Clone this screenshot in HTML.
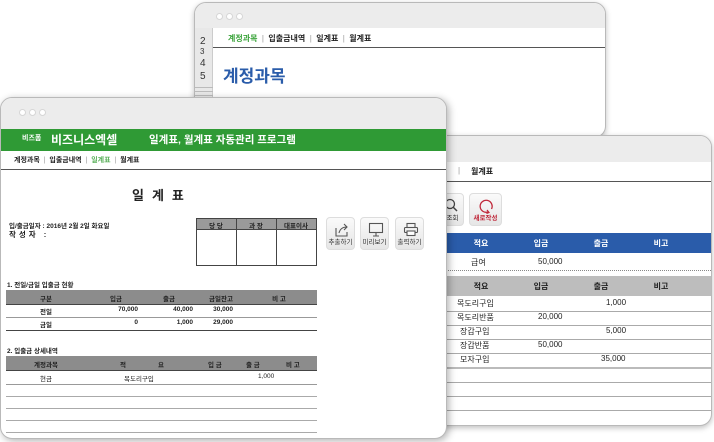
<!DOCTYPE html>
<html><head><meta charset="utf-8">
<style>
*{margin:0;padding:0;box-sizing:border-box}
body{width:714px;height:442px;background:#fff;position:relative;overflow:hidden;font-family:"Liberation Sans","Noto Sans CJK KR",sans-serif;color:#222}
.a{position:absolute}
.win{position:absolute;background:#fff;border:1px solid #b9b9b9;border-radius:12px;overflow:hidden;box-shadow:0 2px 6px rgba(0,0,0,.25)}
.tb{position:absolute;left:0;right:0;top:0;background:#ececec}
.dots{position:absolute;display:flex;gap:3px}
.dots i{width:7px;height:7px;border-radius:50%;background:#fff;border:1px solid #d6d6d6;display:block}
.t{position:absolute;white-space:nowrap;font-size:8px;font-weight:bold}
.c{text-align:center}
.r{text-align:right}
.hl{position:absolute;height:1px;background:#888}
.btn{position:absolute;width:29px;height:33px;border-radius:4px;background:linear-gradient(#fafafa,#e6e6e6);border:1px solid #ddd}
.btn span{position:absolute;bottom:3px;left:0;right:0;text-align:center;font-size:6.5px;color:#333}
</style></head><body>

<!-- back window A -->
<div class="win" style="left:194px;top:2px;width:412px;height:136px">
  <div class="tb" style="height:25px"></div>
  <div class="dots" style="left:21px;top:10px"><i></i><i></i><i></i></div>
  <div class="a" style="left:0;top:25px;width:18px;height:111px;background:#e8e8e8;border-right:1px solid #ccc"></div>
  <div class="t" style="left:5px;top:33px;font-size:10px;font-weight:normal;color:#333">2</div>
  <div class="t" style="left:5px;top:44px;font-size:8px;font-weight:normal;color:#333">3</div>
  <div class="t" style="left:5px;top:55px;font-size:10px;font-weight:normal;color:#333">4</div>
  <div class="t" style="left:5px;top:68px;font-size:10px;font-weight:normal;color:#333">5</div>
  <div class="a" style="left:0;top:84px;width:18px;height:1px;background:#bbb"></div>
  <div class="a" style="left:0;top:88px;width:18px;height:1px;background:#bbb"></div>
  <div class="a" style="left:0;top:92px;width:18px;height:1px;background:#bbb"></div>
  <div class="t" style="left:33px;top:30px;color:#3aa33a">계정과목 &nbsp;<span style="color:#999;font-weight:normal">|</span>&nbsp; <span style="color:#222">입출금내역</span> &nbsp;<span style="color:#999;font-weight:normal">|</span>&nbsp; <span style="color:#222">일계표</span> &nbsp;<span style="color:#999;font-weight:normal">|</span>&nbsp; <span style="color:#222">월계표</span></div>
  <div class="hl" style="left:18px;right:0;top:44px;background:#555"></div>
  <div class="t" style="left:28px;top:59px;font-size:17px;color:#2a5caa">계정과목</div>
  <div class="a" style="left:27px;top:95px;width:130px;height:2px;background:#6b86b5"></div>
</div>

<!-- right window C -->
<div class="win" style="left:420px;top:135px;width:292px;height:291px">
  <div class="tb" style="height:26px"></div>
  <div class="t" style="left:37px;top:30px;color:#999;font-weight:normal">|</div>
  <div class="t" style="left:50px;top:30px">월계표</div>
  <div class="hl" style="left:0;right:0;top:45px;background:#555"></div>
  <div class="btn" style="left:14px;top:57px"><span>회조회</span><svg class="a" style="left:8px;top:4px" width="14" height="14"><circle cx="6" cy="6" r="4.5" fill="none" stroke="#444" stroke-width="1.3"/><path d="M9 9l4 4" stroke="#444" stroke-width="1.5"/></svg></div>
  <div class="btn" style="left:48px;top:57px;width:33px"><span style="color:#c0283a;font-weight:bold">새로작성</span><svg class="a" style="left:9px;top:4px" width="16" height="16"><path d="M9 14A6 6 0 1 1 12.5 11" fill="none" stroke="#c0283a" stroke-width="1.3"/><path d="M8 12l2 2.5-2.5 1" fill="none" stroke="#c0283a" stroke-width="1.2"/></svg></div>
  <div class="a" style="left:0;right:0;top:97px;height:20px;background:#2a5caa"></div>
  <div class="t c" style="left:40px;width:40px;top:102px;color:#fff">적요</div>
  <div class="t c" style="left:100px;width:40px;top:102px;color:#fff">입금</div>
  <div class="t c" style="left:160px;width:40px;top:102px;color:#fff">출금</div>
  <div class="t c" style="left:220px;width:40px;top:102px;color:#fff">비고</div>
  <div class="t" style="left:50px;top:121px;font-weight:normal">급여</div>
  <div class="t" style="left:117px;top:121px;font-weight:normal">50,000</div>
  <div class="a" style="left:0;right:0;top:134px;border-top:1px dotted #888"></div>
  <div class="a" style="left:0;right:0;top:140px;height:20px;background:#bdbdbd"></div>
  <div class="t c" style="left:40px;width:40px;top:145px">적요</div>
  <div class="t c" style="left:100px;width:40px;top:145px">입금</div>
  <div class="t c" style="left:160px;width:40px;top:145px">출금</div>
  <div class="t c" style="left:220px;width:40px;top:145px">비고</div>
  <div class="t" style="left:36px;top:162px;font-weight:normal">목도리구입</div><div class="t" style="left:185px;top:162px;font-weight:normal">1,000</div>
  <div class="hl" style="left:0;right:0;top:175px;background:#aaa"></div>
  <div class="t" style="left:36px;top:176px;font-weight:normal">목도리반품</div><div class="t" style="left:117px;top:176px;font-weight:normal">20,000</div>
  <div class="hl" style="left:0;right:0;top:189px;background:#aaa"></div>
  <div class="t" style="left:39px;top:190px;font-weight:normal">장갑구입</div><div class="t" style="left:185px;top:190px;font-weight:normal">5,000</div>
  <div class="hl" style="left:0;right:0;top:203px;background:#aaa"></div>
  <div class="t" style="left:39px;top:204px;font-weight:normal">장갑반품</div><div class="t" style="left:117px;top:204px;font-weight:normal">50,000</div>
  <div class="hl" style="left:0;right:0;top:217px;background:#aaa"></div>
  <div class="t" style="left:39px;top:218px;font-weight:normal">모자구입</div><div class="t" style="left:180px;top:218px;font-weight:normal">35,000</div>
  <div class="a" style="left:0;right:0;top:231px;height:2px;background:#bbb"></div>
  <div class="hl" style="left:0;right:0;top:246px;background:#aaa"></div>
  <div class="hl" style="left:0;right:0;top:260px;background:#aaa"></div>
  <div class="hl" style="left:0;right:0;top:274px;background:#aaa"></div>
</div>

<!-- front window B -->
<div class="win" style="left:0;top:97px;width:447px;height:342px;box-shadow:2px 2px 8px rgba(0,0,0,.3)">
  <div class="tb" style="height:31px"></div>
  <div class="dots" style="left:18px;top:11px"><i></i><i></i><i></i></div>
  <div class="a" style="left:0;right:0;top:31px;height:22px;background:#2f9a35"></div>
  <div class="t" style="left:21px;top:35px;color:#fff;font-size:7px">비즈폼</div>
  <div class="t" style="left:50px;top:33px;color:#fff;font-size:12px">비즈니스엑셀</div>
  <div class="t" style="left:148px;top:34px;color:#fff;font-size:10.5px">일계표, 월계표 자동관리 프로그램</div>
  <div class="t" style="left:13px;top:57px;font-size:7px">계정과목 &nbsp;<span style="color:#999;font-weight:normal">|</span>&nbsp; 입출금내역 &nbsp;<span style="color:#999;font-weight:normal">|</span>&nbsp; <span style="color:#5ab05a">일계표</span> &nbsp;<span style="color:#999;font-weight:normal">|</span>&nbsp; 월계표</div>
  <div class="hl" style="left:0;right:0;top:71px;background:#555"></div>
  <div class="t" style="left:131px;top:87px;font-size:13px;letter-spacing:8px">일계표</div>
  <div class="t" style="left:8px;top:122px;font-size:6.5px">입/출금일자 : 2016년 2월 2일 화요일</div>
  <div class="t" style="left:8px;top:131px;font-size:7.5px;letter-spacing:3px">작성자 :</div>
  <div class="a" style="left:195px;top:120px;width:121px;height:48px;border:1px solid #444"></div>
  <div class="a" style="left:195px;top:120px;width:121px;height:12px;background:#9a9a9a;border:1px solid #444"></div>
  <div class="a" style="left:235px;top:120px;width:1px;height:48px;background:#444"></div>
  <div class="a" style="left:275px;top:120px;width:1px;height:48px;background:#444"></div>
  <div class="t c" style="left:195px;width:40px;top:122px;font-size:6.5px">당 당</div>
  <div class="t c" style="left:235px;width:40px;top:122px;font-size:6.5px">과 장</div>
  <div class="t c" style="left:275px;width:40px;top:122px;font-size:6.5px">대표이사</div>
  <div class="btn" style="left:325px;top:119px"><span>추출하기</span><svg class="a" style="left:7px;top:4px" width="16" height="15"><path d="M2 6v8h11v-4" fill="none" stroke="#555" stroke-width="1.1"/><path d="M5 11c1-4 4-6 8-6M10 2l3 3-3 3" fill="none" stroke="#555" stroke-width="1.1"/></svg></div>
  <div class="btn" style="left:359px;top:119px"><span>미리보기</span><svg class="a" style="left:7px;top:4px" width="16" height="15"><rect x="1.5" y="1.5" width="13" height="9" fill="none" stroke="#555" stroke-width="1.1"/><path d="M8 10.5v3M5 14h6" stroke="#555" stroke-width="1.1"/></svg></div>
  <div class="btn" style="left:394px;top:119px"><span>출력하기</span><svg class="a" style="left:7px;top:4px" width="16" height="15"><rect x="4" y="1.5" width="8" height="4" fill="none" stroke="#555" stroke-width="1.1"/><rect x="1.5" y="5.5" width="13" height="5" rx="1" fill="none" stroke="#555" stroke-width="1.1"/><rect x="4" y="9" width="8" height="4.5" fill="#fff" stroke="#555" stroke-width="1.1"/></svg></div>

  <div class="t" style="left:6px;top:181px;font-size:6.5px">1. 전일/금일 입출금 현황</div>
  <div class="a" style="left:5px;top:192px;width:311px;height:15px;background:#8c8c8c;border-bottom:1px solid #444"></div>
  <div class="t c" style="left:25px;width:40px;top:195px;font-size:6.5px">구분</div>
  <div class="t c" style="left:95px;width:40px;top:195px;font-size:6.5px">입금</div>
  <div class="t c" style="left:148px;width:40px;top:195px;font-size:6.5px">출금</div>
  <div class="t c" style="left:200px;width:40px;top:195px;font-size:6.5px">금일잔고</div>
  <div class="t c" style="left:258px;width:40px;top:195px;font-size:6.5px">비 고</div>
  <div class="t c" style="left:25px;width:40px;top:208px;font-size:6.5px">전일</div>
  <div class="t r" style="left:95px;width:42px;top:208px;font-size:6.5px">70,000</div>
  <div class="t r" style="left:150px;width:42px;top:208px;font-size:6.5px">40,000</div>
  <div class="t r" style="left:190px;width:42px;top:208px;font-size:6.5px">30,000</div>
  <div class="hl" style="left:5px;width:311px;top:219px;background:#999"></div>
  <div class="t c" style="left:25px;width:40px;top:221px;font-size:6.5px">금일</div>
  <div class="t r" style="left:95px;width:42px;top:221px;font-size:6.5px">0</div>
  <div class="t r" style="left:150px;width:42px;top:221px;font-size:6.5px">1,000</div>
  <div class="t r" style="left:190px;width:42px;top:221px;font-size:6.5px">29,000</div>
  <div class="hl" style="left:5px;width:311px;top:232px;background:#444"></div>

  <div class="t" style="left:6px;top:247px;font-size:6.5px">2. 입출금 상세내역</div>
  <div class="a" style="left:5px;top:258px;width:311px;height:15px;background:#8c8c8c;border-bottom:1px solid #444"></div>
  <div class="t c" style="left:25px;width:40px;top:261px;font-size:6.5px">계정과목</div>
  <div class="t" style="left:119px;top:261px;font-size:6.5px">적</div>
  <div class="t" style="left:157px;top:261px;font-size:6.5px">요</div>
  <div class="t" style="left:207px;top:261px;font-size:6.5px">입 금</div>
  <div class="t" style="left:245px;top:261px;font-size:6.5px">출 금</div>
  <div class="t" style="left:285px;top:261px;font-size:6.5px">비 고</div>
  <div class="t c" style="left:25px;width:40px;top:275px;font-size:6.5px;font-weight:normal">현금</div>
  <div class="t" style="left:123px;top:275px;font-size:6.5px;font-weight:normal">목도리구입</div>
  <div class="t" style="left:257px;top:275px;font-size:6.5px;font-weight:normal">1,000</div>
  <div class="hl" style="left:5px;width:311px;top:286px;background:#999"></div>
  <div class="hl" style="left:5px;width:311px;top:298px;background:#aaa"></div>
  <div class="hl" style="left:5px;width:311px;top:310px;background:#aaa"></div>
  <div class="hl" style="left:5px;width:311px;top:322px;background:#aaa"></div>
  <div class="hl" style="left:5px;width:311px;top:334px;background:#aaa"></div>
</div>
</body></html>
